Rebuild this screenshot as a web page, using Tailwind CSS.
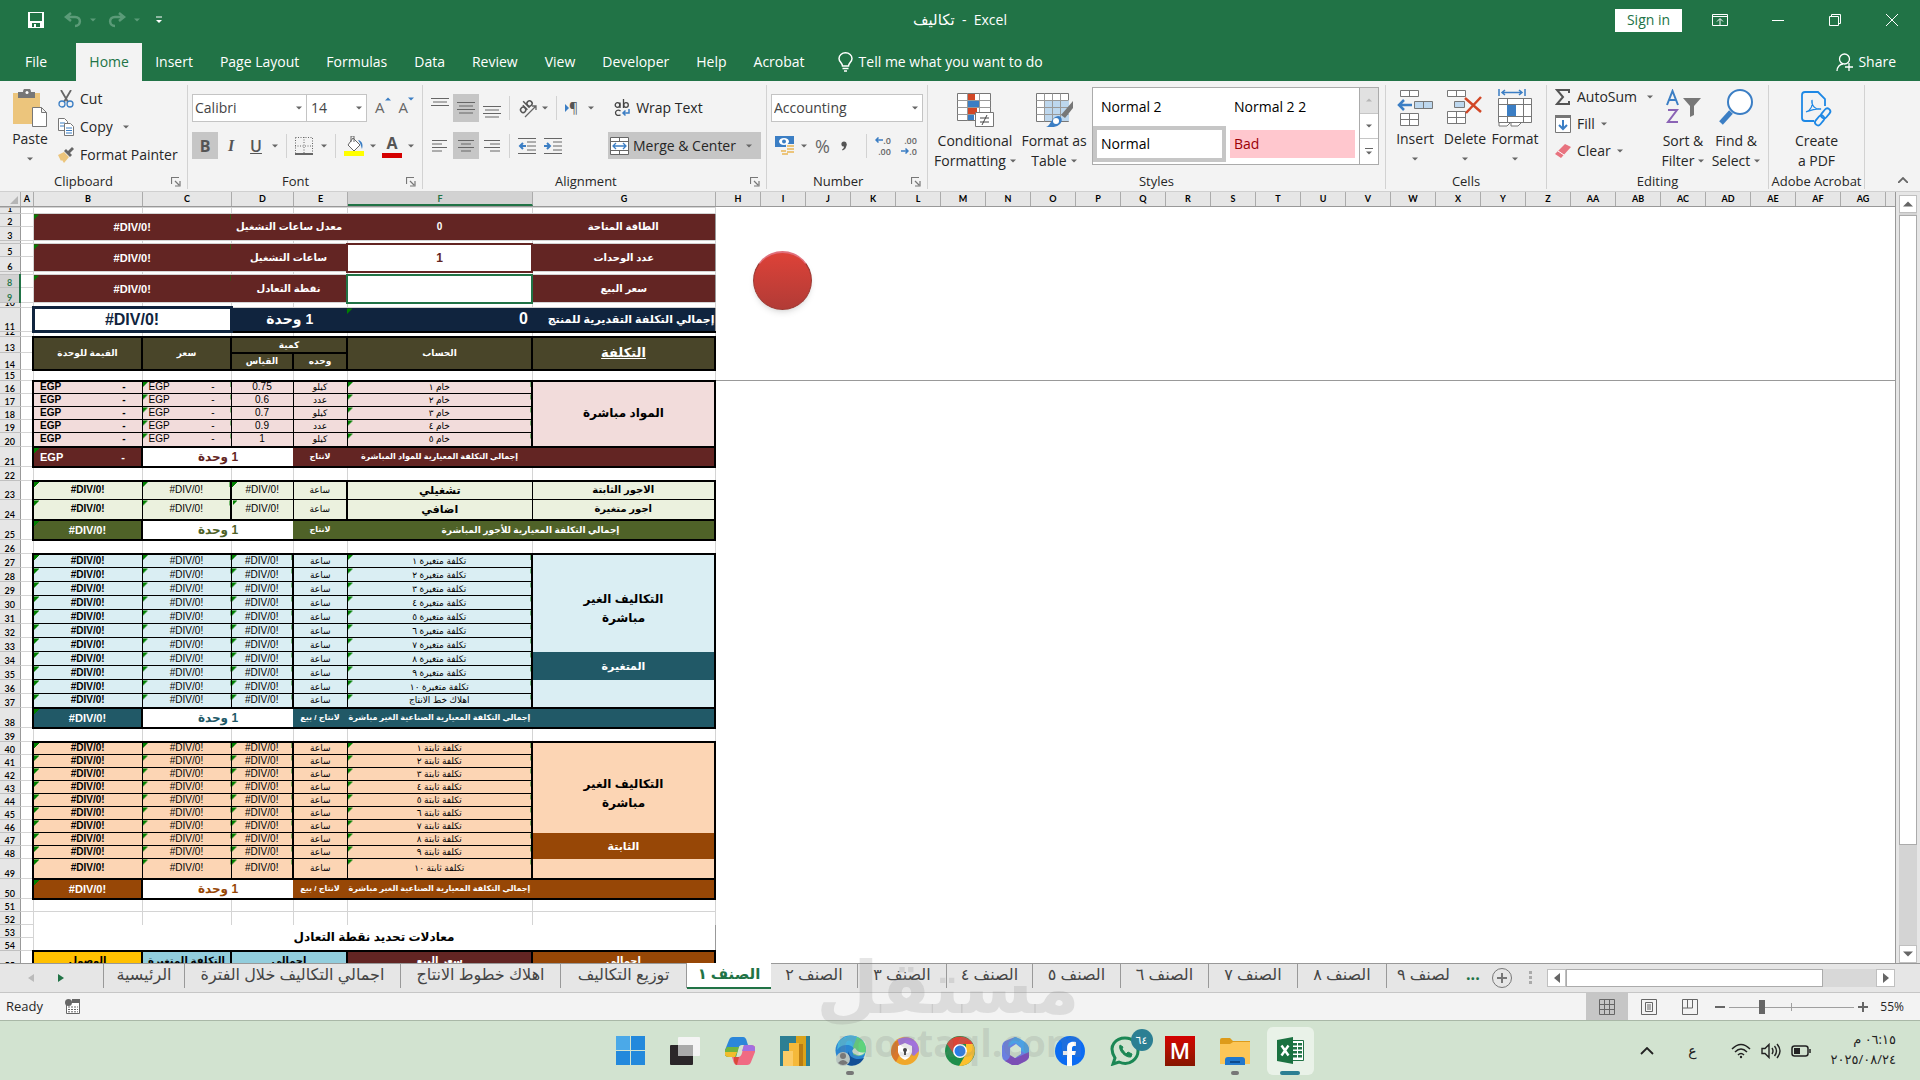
<!DOCTYPE html>
<html lang="en">
<head>
  <meta charset="UTF-8">
  <meta name="viewport" content="width=device-width, initial-scale=1.0">
  <title>تكاليف - Excel</title>
  <script src="https://cdn.jsdelivr.net/npm/@tailwindcss/browser@4"></script>
</head>
<body class="h-screen flex flex-col overflow-hidden bg-[#e6e6e6] font-['Open_Sans','DejaVu_Sans',sans-serif] text-sm text-[#262626]">
  <!-- Shared icons -->
  <svg class="hidden">
    <symbol id="caret" viewBox="0 0 8 4"><path d="M0 0h8L4 4z" fill="#666"/></symbol>
    <symbol id="launcher" viewBox="0 0 10 10"><path d="M.5 7V.5H8M4 4l4 4M9 4v5H4" fill="none" stroke="#777" stroke-width="1.2"/></symbol>
  </svg>

  <!-- Title bar -->
  <header class="bg-[#217346] text-white shrink-0">
    <div class="h-10 mb-[3px] flex items-center relative">
      <div class="flex items-center pl-7 gap-5">
        <button aria-label="Save"><svg class="w-4 h-4" viewBox="0 0 16 16"><path d="M0 0h16v16H0z" fill="#fff"/><path d="M2 1h12v8H2zM4 11h8v4H4z" fill="#217346"/><path d="M6 12h2v3H6z" fill="#fff"/></svg></button>
        <button aria-label="Undo" class="flex items-center gap-2"><svg class="w-[18px] h-4" viewBox="0 0 18 16"><path d="M7 1L2 5l5 4M2 5h9c7 0 6 9 0 9" fill="none" stroke="#5b9b78" stroke-width="2.5"/></svg><svg class="w-1.5 h-1" viewBox="0 0 8 4"><path d="M0 0h8L4 4z" fill="#5b9b78"/></svg></button>
        <button aria-label="Redo" class="flex items-center gap-2 -ml-2"><svg class="w-[18px] h-4" viewBox="0 0 18 16"><path d="M11 1l5 4-5 4M16 5H7c-7 0-6 9 0 9" fill="none" stroke="#5b9b78" stroke-width="2.5"/></svg><svg class="w-1.5 h-1" viewBox="0 0 8 4"><path d="M0 0h8L4 4z" fill="#5b9b78"/></svg></button>
        <button aria-label="Customize" class="-ml-1"><svg class="w-1.5 h-2" viewBox="0 0 6 8"><path d="M0 1h6" stroke="#fff"/><path d="M0 4h6L3 7z" fill="#fff"/></svg></button>
      </div>
      <h1 class="absolute inset-x-0 text-center text-sm font-normal"><bdi class="text-[15px]">تكاليف</bdi>&nbsp; - &nbsp;Excel</h1>
      <div class="ml-auto flex items-center relative pr-[22px]">
        <button class="bg-white text-[#217346] h-[23px] w-[67px] mr-[30px]">Sign in</button>
        <button aria-label="Ribbon options" class="mr-11"><svg class="w-4 h-3" viewBox="0 0 16 12" fill="none" stroke="#fff"><path d="M.5.5h15v11H.5zM.5 2.5h15M8 11V5M5 7.500l3-3 3 3"/></svg></button>
        <button aria-label="Minimize" class="mr-[45px]"><svg class="w-3 h-3" viewBox="0 0 12 12" stroke="#fff"><path d="M0 6.500h12"/></svg></button>
        <button aria-label="Restore" class="mr-[45px]"><svg class="w-3 h-3" viewBox="0 0 12 12" fill="none" stroke="#fff"><path d="M.5 2.500h9v9h-9zM2.500 2.500v-2h9v9h-2"/></svg></button>
        <button aria-label="Close"><svg class="w-3 h-3" viewBox="0 0 12 12" stroke="#fff"><path d="M0 0l12 12M12 0L0 12"/></svg></button>
      </div>
    </div>
    <nav class="h-[38px] flex items-center pl-[25px] pr-6 gap-[27px]">
      <a href="#" class="mr-0.5">File</a>
      <a href="#" class="bg-[#f3f3f3] text-[#217346] h-full w-[66px] flex items-center justify-center -mr-3.5">Home</a>
      <a href="#">Insert</a>
      <a href="#">Page Layout</a>
      <a href="#">Formulas</a>
      <a href="#">Data</a>
      <a href="#">Review</a>
      <a href="#">View</a>
      <a href="#">Developer</a>
      <a href="#">Help</a>
      <a href="#">Acrobat</a>
      <a href="#" class="flex items-center gap-1.5 ml-1.5"><svg class="w-[15px] h-5" viewBox="0 0 15 20" fill="none" stroke="#fff" stroke-width="1.500"><path d="M4.500 14C4.500 11 1 10 1 6.500a6.500 5.700 0 0 1 13 0C14 10 10.500 11 10.500 14zM4.500 16.500h6M6 19h3"/></svg>Tell me what you want to do</a>
      <a href="#" class="ml-auto flex items-center gap-1"><svg class="w-[18px] h-[18px]" viewBox="0 0 18 18" fill="none" stroke="#fff" stroke-width="1.300"><circle cx="8.500" cy="6" r="5"/><path d="M1 18c0-4 3-7 6-7M13 10v8M9 14h8"/></svg>Share</a>
    </nav>
  </header>

  <!-- Ribbon -->
  <section class="h-[111px] shrink-0 bg-[#f3f3f3] border-b border-[#cfcfcf] flex pt-1 pb-0.5">
    <div class="w-[188px] border-r border-[#d2d2d2] flex flex-col">
      <div class="flex h-[90px] pl-3">
        <button class="flex flex-col items-center w-9 pt-1">
          <svg class="w-[34px] h-[38px]" viewBox="0 0 34 38"><path d="M0 4h27v31H0z" fill="#ecc57c"/><path d="M5 3h5a4 4 0 0 1 8 0h4v6H5z" fill="#777"/><circle cx="14" cy="3.500" r="1.500" fill="#fff"/><path d="M19.500 18.500h9l5 5v14h-14zM28.500 18.500v5h5" fill="#fff" stroke="#777"/></svg>
          <span class="leading-6">Paste</span>
          <svg class="w-1.5 h-1 mt-1.5"><use href="#caret"/></svg>
        </button>
        <div class="flex flex-col pl-2.5 leading-7">
          <button class="flex items-center gap-1.5"><svg class="w-4 h-[18px]" viewBox="0 0 16 18" fill="none" stroke-width="1.800"><path d="M3 0l7 12M13 0L6 12" stroke="#666"/><circle cx="4" cy="14" r="3" stroke="#3b7ec4" stroke-width="1.300"/><circle cx="12" cy="14" r="3" stroke="#3b7ec4" stroke-width="1.300"/></svg>Cut</button>
          <button class="flex items-center gap-1.5"><svg class="w-4 h-[18px]" viewBox="0 0 16 18" fill="#fff" stroke="#777"><path d="M.5.5h6l3 3v9h-9z"/><path d="M2 5h5M2 8h5" stroke="#3b7ec4"/><path d="M6.500 5.500h6l3 3v9h-9z"/><path d="M8 10h6M8 12.500h6M8 15h6" stroke="#3b7ec4"/></svg>Copy<svg class="w-1.5 h-1 ml-1"><use href="#caret"/></svg></button>
          <button class="flex items-center gap-1.5 whitespace-nowrap"><svg class="w-4 h-4" viewBox="0 0 16 16"><path d="M0 8l6-3 5 5-5 6-2-3-1 1z" fill="#ecc57c"/><path d="M6 4l2-2 2 2 4-4 2 2-4 4 2 2-2 2z" fill="#666"/></svg>Format Painter</button>
        </div>
      </div>
      <div class="flex items-center justify-between pl-[54px] pr-1.5 text-[13px] leading-[15px]">Clipboard<svg class="w-2.5 h-2.5"><use href="#launcher"/></svg></div>
    </div>

    <div class="w-[235px] border-r border-[#d2d2d2] flex flex-col">
      <div class="h-[90px] flex flex-col gap-2.5 pl-1 pt-[9px]">
        <div class="flex items-center h-7">
          <div class="w-[115px] h-7 border border-[#c4c4c4] bg-white flex items-center pr-1"><select aria-label="Font" class="appearance-none flex-1 pl-0.5 text-[#444]"><option>Calibri</option></select><svg class="w-1.5 h-1"><use href="#caret"/></svg></div>
          <div class="w-[60px] h-7 border border-l-0 border-[#c4c4c4] bg-white flex items-center pr-1"><select aria-label="Font size" class="appearance-none flex-1 pl-1 text-[#444]"><option>14</option></select><svg class="w-1.5 h-1"><use href="#caret"/></svg></div>
          <button aria-label="Grow font" class="ml-2 flex text-[15px] text-[#666]">A<svg class="w-1.5 h-1" viewBox="0 0 8 4"><path d="M0 4h8L4 0z" fill="#3b7ec4"/></svg></button>
          <button aria-label="Shrink font" class="ml-2 flex text-[15px] text-[#666]">A<svg class="w-1.5 h-1" viewBox="0 0 8 4"><path d="M0 0h8L4 4z" fill="#3b7ec4"/></svg></button>
        </div>
        <div class="flex items-center h-[27px] text-base text-[#555]">
          <button class="w-[26px] h-full bg-[#c6c6c6] font-bold">B</button>
          <button class="w-[26px] font-['Liberation_Serif',serif] font-bold italic">I</button>
          <button class="w-6 underline font-semibold">U</button>
          <svg class="w-1.5 h-1 mx-1"><use href="#caret"/></svg>
          <span class="w-px h-6 bg-[#d2d2d2] ml-1 mr-2"></span>
          <button aria-label="Borders"><svg class="w-[18px] h-[18px]" viewBox="0 0 18 18" fill="none" stroke="#666"><path d="M.5.5h17v16M.5.5v16M9 0v16M0 9h18" stroke-dasharray="1 1.500"/><path d="M0 17h18" stroke-width="2"/></svg></button>
          <svg class="w-1.5 h-1 mx-2"><use href="#caret"/></svg>
          <span class="w-px h-6 bg-[#d2d2d2] mr-2"></span>
          <button aria-label="Fill color"><svg class="w-5 h-5" viewBox="0 0 20 20"><path d="M9 2l7 7-6 6-6-6z" fill="#fff" stroke="#666"/><path d="M7 6V0h3v6" fill="none" stroke="#666"/><path d="M14 4c5 1 5 6 4 9-1-3-1-5-4-9" fill="#3b7ec4"/><path d="M0 15h20v5H0z" fill="#ff0"/></svg></button>
          <svg class="w-1.5 h-1 mx-1.5"><use href="#caret"/></svg>
          <button class="w-5 h-6 leading-[18px] font-bold border-b-[5px] border-[#d40000]">A</button>
          <svg class="w-1.5 h-1 mx-1.5"><use href="#caret"/></svg>
        </div>
      </div>
      <div class="flex items-center justify-between pl-[94px] pr-1.5 text-[13px] leading-[15px]">Font<svg class="w-2.5 h-2.5"><use href="#launcher"/></svg></div>
    </div>

    <div class="w-[344px] border-r border-[#d2d2d2] flex flex-col">
      <div class="h-[90px] flex flex-col gap-2.5 pl-1 pr-[5px] pt-[9px]">
        <div class="flex items-center h-7">
          <button aria-label="Top align" class="w-[26px] h-7 flex justify-center pt-1"><svg class="w-[18px] h-2" viewBox="0 0 18 8" stroke="#666"><path d="M0 .5h18M2 4h14M0 7.500h18"/></svg></button>
          <button aria-label="Middle align" class="w-[26px] h-7 bg-[#c6c6c6] flex justify-center items-center"><svg class="w-[18px] h-3" viewBox="0 0 18 12" stroke="#666"><path d="M0 .5h18M2 4h14M0 7.500h18M2 11h14"/></svg></button>
          <button aria-label="Bottom align" class="w-[26px] h-7 flex justify-center items-end pb-1"><svg class="w-[18px] h-3" viewBox="0 0 18 12" stroke="#666"><path d="M0 .5h18M2 4h14M0 7.500h18M2 11h14"/></svg></button>
          <span class="w-px h-6 bg-[#d2d2d2] ml-1 mr-2"></span>
          <button aria-label="Orientation"><svg class="w-5 h-5 overflow-visible" viewBox="0 0 20 20" fill="none" stroke="#555" stroke-width="1.500"><g transform="rotate(-45 8 9)"><circle cx="4" cy="9" r="2.600"/><path d="M7 5.500V12"/><path d="M10 3v9"/><circle cx="13" cy="9" r="2.600"/></g><path d="M7 19L18 8M18 12V8h-4" stroke="#666" stroke-width="1.300"/></svg></button>
          <svg class="w-1.5 h-1 ml-1 mr-2"><use href="#caret"/></svg>
          <span class="w-px h-6 bg-[#d2d2d2] mr-2"></span>
          <button aria-label="Text direction" class="flex items-center text-[#555]"><svg class="w-1 h-2" viewBox="0 0 4 8"><path d="M0 0l4 4-4 4z" fill="#3b7ec4"/></svg>¶</button>
          <svg class="w-1.5 h-1 mx-2.5"><use href="#caret"/></svg>
          <button class="flex items-center gap-1.5 ml-2.5 whitespace-nowrap"><svg class="w-4 h-[18px]" viewBox="0 0 16 18" fill="none" stroke="#444" stroke-width="1.300"><circle cx="3.500" cy="6" r="2.300"/><path d="M6 3.500V9M9.500 0v9M6.500 11.800c-3-1.500-5 0-5 2s2 3.500 5 2"/><circle cx="12" cy="6" r="2.300"/><path d="M15 10v4H9M11.500 11.500L9 14l2.500 2.500" stroke="#3b7ec4" stroke-width="1.500"/></svg>Wrap Text</button>
        </div>
        <div class="flex items-center h-[27px]">
          <button aria-label="Align left" class="w-[26px] h-full flex justify-center items-center"><svg class="w-4 h-3" viewBox="0 0 16 12" stroke="#666"><path d="M0 .5h15M0 4h10M0 7.500h15M0 11h10"/></svg></button>
          <button aria-label="Center" class="w-[26px] h-full bg-[#c6c6c6] flex justify-center items-center"><svg class="w-4 h-3" viewBox="0 0 16 12" stroke="#666"><path d="M0 .5h16M3 4h10M0 7.500h16M3 11h10"/></svg></button>
          <button aria-label="Align right" class="w-[26px] h-full flex justify-center items-center"><svg class="w-4 h-3" viewBox="0 0 16 12" stroke="#666"><path d="M0 .5h16M6 4h10M0 7.500h16M6 11h10"/></svg></button>
          <span class="w-px h-6 bg-[#d2d2d2] ml-1 mr-2"></span>
          <button aria-label="Decrease indent" class="mr-2"><svg class="w-[18px] h-4" viewBox="0 0 18 16" stroke="#666"><path d="M0 .5h18M9 4h9M9 8h9M9 12h9M0 15.500h18"/><path d="M8 8H2M5 5L2 8l3 3" fill="none" stroke="#3b7ec4" stroke-width="2"/></svg></button>
          <button aria-label="Increase indent"><svg class="w-[18px] h-4" viewBox="0 0 18 16" stroke="#666"><path d="M0 .5h18M9 4h9M9 8h9M9 12h9M0 15.500h18"/><path d="M0 8h6M3 5l3 3-3 3" fill="none" stroke="#3b7ec4" stroke-width="2"/></svg></button>
          <button class="ml-auto w-[153px] h-full bg-[#c6c6c6] flex items-center gap-1 pl-0.5 whitespace-nowrap"><svg class="w-[19px] h-[18px]" viewBox="0 0 19 18" fill="#fff" stroke="#666"><path d="M.5.5h18v17H.5zM.5 4.500h18M.5 13.500h18M9.500.5v4M9.500 13.500v4"/><path d="M3 9h13M6 6L3 9l3 3M13 6l3 3-3 3" fill="none" stroke="#3b7ec4" stroke-width="1.300"/></svg>Merge &amp; Center<svg class="w-1.5 h-1 ml-1.5"><use href="#caret"/></svg></button>
        </div>
      </div>
      <div class="flex items-center justify-between pl-[132px] pr-1.5 text-[13px] leading-[15px]">Alignment<svg class="w-2.5 h-2.5"><use href="#launcher"/></svg></div>
    </div>

    <div class="w-[161px] border-r border-[#d2d2d2] flex flex-col">
      <div class="h-[90px] flex flex-col gap-2.5 px-1 pt-[9px]">
        <div class="h-7 border border-[#c4c4c4] bg-white flex items-center pr-1"><select aria-label="Number format" class="appearance-none flex-1 pl-0.5 text-[#444]"><option>Accounting</option></select><svg class="w-1.5 h-1"><use href="#caret"/></svg></div>
        <div class="flex items-center h-[27px] text-[#666]">
          <button aria-label="Accounting format" class="ml-1"><svg class="w-5 h-[19px]" viewBox="0 0 20 19"><path d="M0 0h19v11H0z" fill="#3b7ec4"/><ellipse cx="9" cy="5.500" rx="5" ry="3.500" fill="#fff"/><circle cx="9" cy="5.500" r="2" fill="#3b7ec4"/><path d="M11 8h9v10H6v-5h5z" fill="#f3f3f3"/><path d="M12 9h7v2h-7zM12 12h7v2h-7zM12 15h7v2h-7zM6 14h5v2H6zM7 17h6v2H7z" fill="#ecc57c"/></svg></button>
          <svg class="w-1.5 h-1 ml-1.5"><use href="#caret"/></svg>
          <button class="ml-2 text-lg">%</button>
          <button aria-label="Comma style" class="w-7 h-full flex items-center justify-center"><svg class="w-1.5 h-2.5" viewBox="0 0 6 10"><circle cx="3" cy="3" r="2.600" fill="#555"/><path d="M5.600 3q0 5-4 6.500L1 8.500Q3.500 7 3 4z" fill="#555"/></svg></button>
          <span class="w-px h-6 bg-[#d2d2d2] mx-2"></span>
          <button aria-label="Increase decimal" class="mr-2.5 w-4 text-[9px] leading-[11px] font-semibold text-right"><span class="flex items-center justify-between"><svg class="w-2 h-1.5" viewBox="0 0 8 6"><path d="M8 3H1M3.500.5L1 3l2.500 2.500" fill="none" stroke="#3b7ec4" stroke-width="1.500"/></svg>.0</span>.00</button>
          <button aria-label="Decrease decimal" class="w-4 text-[9px] leading-[11px] font-semibold text-right">.00<span class="flex items-center justify-between"><svg class="w-2 h-1.5" viewBox="0 0 8 6"><path d="M0 3h7M4.500.5L7 3 4.500 5.500" fill="none" stroke="#3b7ec4" stroke-width="1.500"/></svg>.0</span></button>
        </div>
      </div>
      <div class="flex items-center justify-between pl-[46px] pr-1.5 text-[13px] leading-[15px]">Number<svg class="w-2.5 h-2.5"><use href="#launcher"/></svg></div>
    </div>

    <div class="w-[458px] border-r border-[#d2d2d2] flex flex-col">
      <div class="h-[90px] flex pl-1.5">
        <button class="w-[82px] flex flex-col items-center pt-2 leading-5">
          <svg class="w-[37px] h-[34px] mb-1" viewBox="0 0 37 34"><path d="M.5.5h33v27H.5z" fill="#fff" stroke="#777"/><path d="M.5 7.500h33M.5 14.500h33M.5 21.500h33M10.500.5v27M22.500.5v27" stroke="#999"/><path d="M11 1h7v6h-7zM11 15h9v6h-9z" fill="#d24726"/><path d="M11 8h11v6H11zM11 22h6v5h-6z" fill="#3b7ec4"/><path d="M18.500 19.500h18v14h-18z" fill="#fff" stroke="#777"/><path d="M23 25h9M23 29h9M30 22l-5 10" stroke="#444"/></svg>
          <span>Conditional</span><span class="flex items-center gap-1">Formatting<svg class="w-1.5 h-1"><use href="#caret"/></svg></span>
        </button>
        <button class="w-[76px] flex flex-col items-center pt-2 leading-5 whitespace-nowrap">
          <svg class="w-[37px] h-[34px] mb-1" viewBox="0 0 37 34"><path d="M.5.5h32v28H.5z" fill="#fff" stroke="#777"/><path d="M8 7h25v21H8z" fill="#bdd7ee"/><path d="M.5 7.500h32M.5 14.500h32M.5 21.500h32M8.500.5v28M16.500.5v28M24.500.5v28" stroke="#999"/><path d="M37 8L25 22l4 3 8-10z" fill="#777"/><path d="M10 34c5-1 5-10 12-11 4 0 5 5 2 8-3 3-9 4-14 3z" fill="#3b7ec4"/><circle cx="20" cy="28" r="3" fill="#fff"/></svg>
          <span>Format as</span><span class="flex items-center gap-1">Table<svg class="w-1.5 h-1"><use href="#caret"/></svg></span>
        </button>
        <div class="mt-0.5 h-[78px] w-[287px] border border-[#ababab] bg-white flex text-black">
          <div class="flex-1 grid grid-cols-2 grid-rows-[38px_36px]">
            <button class="text-left pl-2">Normal 2</button>
            <button class="text-left pl-2">Normal 2 2</button>
            <button class="text-left pl-1 border-4 border-[#c6c6c6]">Normal</button>
            <button class="text-left pl-1 bg-[#ffc7ce] text-[#9c0006] h-7 mt-1 mx-1">Bad</button>
          </div>
          <div class="w-[19px] border-l border-[#ababab] flex flex-col divide-y divide-[#c6c6c6]">
            <button aria-label="Up" class="flex-1 bg-[#e1e1e1] flex items-center justify-center"><svg class="w-1.5 h-1" viewBox="0 0 8 4"><path d="M0 4h8L4 0z" fill="#b5b5b5"/></svg></button>
            <button aria-label="Down" class="flex-1 flex items-center justify-center"><svg class="w-1.5 h-1"><use href="#caret"/></svg></button>
            <button aria-label="More" class="flex-1 flex flex-col gap-0.5 items-center justify-center"><span class="w-2 h-px bg-[#666]"></span><svg class="w-1.5 h-1"><use href="#caret"/></svg></button>
          </div>
        </div>
      </div>
      <div class="text-center text-[13px] leading-[15px]">Styles</div>
    </div>

    <div class="w-[161px] border-r border-[#d2d2d2] flex flex-col">
      <div class="h-[90px] flex pl-1">
        <button class="w-[50px] flex flex-col items-center pt-1">
          <svg class="w-9 h-[38px]" viewBox="0 0 36 38" fill="#fff" stroke="#777"><path d="M3.500 1.500h18v6h-18zM12.500 1.500v6M3.500 24.500h18v12h-18zM12.500 24.500v12M3.500 30.500h18"/><path d="M17.500 12.500h18v7h-18zM26.500 12.500v7" fill="#bdd7ee"/><path d="M15 16H2M7 11l-5 5 5 5" fill="none" stroke="#3b7ec4" stroke-width="2.500"/></svg>
          <span class="leading-6">Insert</span><svg class="w-1.5 h-1 mt-1.5"><use href="#caret"/></svg>
        </button>
        <button class="w-[50px] flex flex-col items-center pt-1">
          <svg class="w-9 h-[38px]" viewBox="0 0 36 38" fill="#fff" stroke="#777"><path d="M.5 1.500h18v6H.5zM9.500 1.500v6M.5 22.500h18v12H.5zM9.500 22.500v12M.5 28.500h18"/><path d="M7.500 12.500h10v6h-10z" fill="#bdd7ee"/><path d="M18 9l16 14M34 8L19 24" stroke="#d24726" stroke-width="2.500"/></svg>
          <span class="leading-6">Delete</span><svg class="w-1.5 h-1 mt-1.5"><use href="#caret"/></svg>
        </button>
        <button class="w-[50px] flex flex-col items-center pt-1">
          <svg class="w-9 h-[38px]" viewBox="0 0 36 38" fill="#fff" stroke="#777"><path d="M1.500 9.500h33v24h-33zM10.500 9.500v24M26.500 9.500v24M1.500 15.500h33M1.500 27.500h33"/><path d="M10 16h9v11h-9z" fill="#3b7ec4" stroke="none"/><path d="M2 34v3h8l3-3M14 34v3h7l3-3"/><path d="M2 0v7M28 0v7M5 3.500h20M8 1L5 3.500 8 6M22 1l3 2.500L22 6" fill="none" stroke="#3b7ec4" stroke-width="1.500"/></svg>
          <span class="leading-6">Format</span><svg class="w-1.5 h-1 mt-1.5"><use href="#caret"/></svg>
        </button>
      </div>
      <div class="text-center text-[13px] leading-[15px]">Cells</div>
    </div>

    <div class="w-[222px] border-r border-[#d2d2d2] flex flex-col">
      <div class="h-[90px] flex pl-2">
        <div class="flex flex-col leading-[27px] w-[102px] -mt-0.5">
          <button class="flex items-center gap-1.5"><svg class="w-4 h-4" viewBox="0 0 16 16"><path d="M14 4V1H2l6 7-6 7h12v-3" fill="none" stroke="#555" stroke-width="2"/></svg>AutoSum<svg class="w-1.5 h-1 ml-1"><use href="#caret"/></svg></button>
          <button class="flex items-center gap-1.5"><svg class="w-4 h-[18px]" viewBox="0 0 16 18"><path d="M.5.5h15v17H.5z" fill="#fff" stroke="#777"/><path d="M0 0h16v3H0z" fill="#777"/><path d="M8 5v9M4 10l4 4 4-4" fill="none" stroke="#3b7ec4" stroke-width="2"/></svg>Fill<svg class="w-1.5 h-1"><use href="#caret"/></svg></button>
          <button class="flex items-center gap-1.5"><svg class="w-4 h-4" viewBox="0 0 16 16"><path d="M0 11L10 1l6 3L6 15z" fill="#e8737f"/><path d="M3 8l6 4" stroke="#fff"/></svg>Clear<svg class="w-1.5 h-1"><use href="#caret"/></svg></button>
        </div>
        <button class="w-[52px] flex flex-col items-center pt-1 leading-5 whitespace-nowrap">
          <svg class="w-9 h-9 mb-1.5" viewBox="0 0 36 36"><path d="M2 16L7.500 2 13 16M4 11h7" fill="none" stroke="#3b7ec4" stroke-width="2"/><path d="M3 21h9L3 33h10" fill="none" stroke="#8b63b5" stroke-width="2"/><path d="M18 9h18l-7 8v9l-4 2V17z" fill="#777"/></svg>
          <span>Sort &amp;</span><span class="flex items-center gap-1">Filter<svg class="w-1.5 h-1"><use href="#caret"/></svg></span>
        </button>
        <button class="w-[54px] flex flex-col items-center pt-1 leading-5 whitespace-nowrap">
          <svg class="w-9 h-9 mb-1.5" viewBox="0 0 36 36" fill="none" stroke="#3b7ec4"><path d="M3 34l10-11" stroke-width="5"/><circle cx="22" cy="13" r="12" fill="#fff" stroke-width="2"/></svg>
          <span>Find &amp;</span><span class="flex items-center gap-1">Select<svg class="w-1.5 h-1"><use href="#caret"/></svg></span>
        </button>
      </div>
      <div class="text-center text-[13px] leading-[15px]">Editing</div>
    </div>

    <div class="w-24 border-r border-[#d2d2d2] flex flex-col">
      <button class="h-[90px] flex flex-col items-center pt-1.5 leading-5">
        <svg class="w-8 h-9 mb-1" viewBox="0 0 32 36" fill="none" stroke="#1e88e5" stroke-width="1.800"><path d="M13 30H4q-3 0-3-3V4q0-3 3-3h13l7 7v7"/><path d="M5 21c5-2 7-7 6-12-1 6 4 10 9 9-6-1-10 1-15 3z" stroke-width="1.300"/><rect x="22" y="17" width="6" height="11" rx="3" transform="rotate(40 25 22)"/><rect x="16" y="24" width="6" height="11" rx="3" transform="rotate(40 19 29)"/></svg>
        <span>Create</span><span>a PDF</span>
      </button>
      <div class="text-center text-[13px] leading-[15px] whitespace-nowrap">Adobe Acrobat</div>
    </div>
    <button aria-label="Collapse ribbon" class="ml-auto self-end mr-3 mb-1.5"><svg class="w-2.5 h-1.5" viewBox="0 0 10 6" fill="none" stroke="#666" stroke-width="1.800"><path d="M0 6l5-5 5 5"/></svg></button>
  </section>

  <!-- Worksheet -->
  <main class="flex-1 min-h-0 flex">
    <div class="flex-1 min-w-0 flex flex-col border-r border-[#999]">
      <div id="columns" class="h-[15px] shrink-0 flex border-b border-[#999] overflow-hidden text-[9px] leading-[14px] font-bold text-center text-black font-['Lato',sans-serif]"></div>
      <div class="flex-1 min-h-0 flex overflow-hidden bg-white">
        <table id="sheet" class="w-[716px] shrink-0 self-start table-fixed border-collapse border-r border-[#999] text-[10px] leading-[10px] text-black font-['Liberation_Sans','DejaVu_Sans',sans-serif]">
          <colgroup>
            <col class="w-5"><col class="w-[13px]"><col class="w-[109px]"><col class="w-[89px]"><col class="w-[62px]"><col class="w-[54px]"><col class="w-[185px]"><col class="w-[183px]">
          </colgroup>
          <tbody></tbody>
        </table>
        <div class="flex-1">
          <div class="h-[174px] border-b border-[#999] pt-11 pl-[37px]">
            <div class="size-[59px] rounded-full bg-linear-to-b from-[#dd4238] to-[#b23b36] border border-t-2 border-[#9c3a34] border-t-[#e0707c] shadow-md"></div>
          </div>
        </div>
      </div>
    </div>
    <!-- Vertical scrollbar -->
    <div class="w-6 flex flex-col items-center">
      <button aria-label="Scroll up" class="mt-[3px] w-[18px] h-[18px] shrink-0 bg-white border border-[#c0c0c0] flex items-center justify-center"><svg class="w-2.5 h-1.5" viewBox="0 0 8 4"><path d="M0 4h8L4 0z" fill="#666"/></svg></button>
      <div class="w-[18px] flex-1 bg-[#d4d4d4] flex flex-col"><div class="h-[86%] mt-0.5 bg-white border border-[#ababab]"></div></div>
      <button aria-label="Scroll down" class="w-[18px] h-[18px] shrink-0 bg-white border border-[#c0c0c0] flex items-center justify-center"><svg class="w-2.5 h-1.5"><use href="#caret"/></svg></button>
    </div>
  </main>

  <!-- Sheet tabs -->
  <div class="h-[30px] shrink-0 border-t border-[#999] border-b border-b-[#c6c6c6] flex text-base text-[#444] relative">
    <div class="w-[103px] flex items-center pl-7 gap-6">
      <button aria-label="Previous sheet"><svg class="w-1.5 h-2" viewBox="0 0 6 8"><path d="M6 0v8L0 4z" fill="#bbb"/></svg></button>
      <button aria-label="Next sheet"><svg class="w-1.5 h-2" viewBox="0 0 6 8"><path d="M0 0v8l6-4z" fill="#217346"/></svg></button>
    </div>
    <div id="tabs" class="flex"></div>
    <span class="pl-1.5 leading-5 font-bold text-[#217346]">...</span>
    <button aria-label="New sheet" class="ml-3"><svg class="w-5 h-5" viewBox="0 0 20 20" fill="none" stroke="#777"><circle cx="10" cy="10" r="9.500"/><path d="M5 10h10M10 5v10" stroke-width="2"/></svg></button>
    <div class="ml-auto flex items-center mr-[25px]">
      <svg class="w-1 h-3.5 mr-3.5" viewBox="0 0 4 14"><path d="M0 0h3v3H0zM0 5h3v3H0zM0 10h3v3H0z" fill="#aaa"/></svg>
      <button aria-label="Scroll left" class="w-[19px] h-[18px] bg-white border border-[#c0c0c0] flex items-center justify-center"><svg class="w-1.5 h-2.5" viewBox="0 0 6 10"><path d="M6 0v10L0 5z" fill="#666"/></svg></button>
      <div class="w-[310px] h-[18px] bg-[#d8d8d8]"><div class="w-[257px] h-[18px] bg-white border border-[#ababab]"></div></div>
      <button aria-label="Scroll right" class="w-[19px] h-[18px] bg-white border border-[#c0c0c0] flex items-center justify-center"><svg class="w-1.5 h-2.5" viewBox="0 0 6 10"><path d="M0 0v10l6-5z" fill="#666"/></svg></button>
    </div>
  </div>

  <!-- Status bar -->
  <div class="h-[27px] shrink-0 bg-[#f3f3f3] flex items-center pl-1.5 text-[13px]">
    <span>Ready</span>
    <svg class="w-[15px] h-[15px] ml-[22px]" viewBox="0 0 15 15"><path d="M1.500 3.500h13v11h-13z" fill="#fff" stroke="#666"/><path d="M7 0h8v4H7z" fill="#666"/><circle cx="3.500" cy="3.500" r="3.500" fill="#666"/><path d="M3 8h10M3 10.500h10M3 12.800h10" stroke="#666" stroke-dasharray="2 1"/></svg>
    <div class="ml-auto flex items-center h-full pr-4">
      <button aria-label="Normal view" class="w-[42px] h-full bg-[#c6c6c6] flex items-center justify-center"><svg class="w-4 h-4" viewBox="0 0 16 16" fill="none" stroke="#666"><path d="M.5.5h15v15H.5zM5.500 0v16M10.500 0v16M0 5.500h16M0 10.500h16"/></svg></button>
      <button aria-label="Page layout" class="w-[41px] flex justify-center"><svg class="w-4 h-4" viewBox="0 0 16 16" fill="none" stroke="#666"><path d="M.5.5h15v15H.5zM4.500 3.500h7v9h-7zM6 6h4M6 8h4M6 10h4"/></svg></button>
      <button aria-label="Page break" class="w-[42px] flex justify-center"><svg class="w-4 h-4" viewBox="0 0 16 16" fill="none" stroke="#666"><path d="M.5.5h15v15H.5zM5.500 0v9M10.500 0v9H0"/></svg></button>
      <button aria-label="Zoom out" class="w-2.5 h-0.5 bg-[#666] ml-1"></button>
      <div class="relative w-[125px] h-4 ml-1"><div class="absolute inset-x-0 top-2 h-px bg-[#a0a0a0]"></div><div class="absolute left-[62px] top-1 w-px h-2 bg-[#a0a0a0]"></div><div class="absolute left-[30px] top-px w-1.5 h-3.5 bg-[#666]"></div></div>
      <button aria-label="Zoom in" class="ml-1"><svg class="w-2.5 h-2.5" viewBox="0 0 10 10" stroke="#666" stroke-width="2"><path d="M0 5h10M5 0v10"/></svg></button>
      <span class="ml-3 text-xs">55%</span>
    </div>
  </div>

  <!-- Taskbar -->
  <footer class="h-[60px] shrink-0 bg-[#d2e3d0] border-t border-[#a9b8a7] relative flex items-center justify-center">
    <div class="flex">
      <button aria-label="Start" class="w-[55px] flex justify-center items-center"><svg class="w-[29px] h-[29px]" viewBox="0 0 29 29"><path d="M0 0h14v14H0z" fill="#4ba9e8"/><path d="M15 0h14v14H15zM0 15h14v14H0zM15 15h14v14H15z" fill="#2389dc"/></svg></button>
      <button aria-label="Task view" class="w-[55px] flex justify-center items-center"><svg class="w-[30px] h-7" viewBox="0 0 30 28"><rect x="8" width="22" height="19" rx="1" fill="#f4f4f4"/><rect y="8" width="23" height="20" rx="1" fill="#2b2629"/><path d="M8 8h15v11H8z" fill="#aaa"/></svg></button>
      <button aria-label="Copilot" class="w-[55px] flex justify-center items-center"><svg class="w-[30px] h-7" viewBox="0 0 30 28"><path d="M8 0h10q3 0 4 5l1 3h-6q-3 0-4 4l-2 8H4q-6 0-4-7L4 3q1-3 4-3z" fill="#2b86d9"/><path d="M2 10h12l-3 10H4q-6 0-4-7z" fill="#72b43e"/><path d="M0 15h12l-2 5H4q-5 0-4-5z" fill="#f1bd2b"/><path d="M22 28H12q-3 0-4-5l-1-3h6q3 0 4-4l2-8h7q6 0 4 7l-4 10q-1 3-4 3z" fill="#f06a83"/><path d="M19 8h7q5 0 4 6H17z" fill="#a36fe0"/><path d="M9 20h5l-2 8q-2 0-3-4z" fill="#d94a3a"/></svg></button>
      <button aria-label="Power BI" class="w-[55px] flex justify-center items-center"><svg class="w-[30px] h-[30px]" viewBox="0 0 30 30"><path d="M0 0h30v30H0z" fill="#2d7f93"/><path d="M16 0h10v30H16z" fill="#dba31a"/><path d="M9 7h10v23H9z" fill="#f5b93a"/><path d="M3 15h10v15H3z" fill="#fbcb66"/><path d="M19 8h4v22h-4z" fill="#b97c12"/></svg></button>
      <button aria-label="Edge" class="w-[55px] flex justify-center items-center relative"><svg class="w-[31px] h-[31px]" viewBox="0 0 31 31"><circle cx="15.500" cy="15.500" r="15" fill="#2a86d1"/><path d="M3 8C9-3 30-2 31 14c0 8-8 8-13 5 3-4 0-9-6-9-4 0-7 1-10 5z" fill="#48b4dd"/><path d="M22 2c7 3 9 8 9 13-1 6-8 7-13 4 2-3 1-5 0-7z" fill="#5fd37b"/><path d="M18 18q-2-3 2-5 4 6 10 4-3 4-8 3z" fill="#d2e3d0"/><path d="M14 16c-1 6 7 10 15 7-4 8-14 10-19 5z" fill="#124f96"/><circle cx="8" cy="24" r="7" fill="#b8c4c0"/><circle cx="8" cy="21" r="3" fill="#777"/><path d="M3 28q5-6 10 0-5 4-10 0z" fill="#777"/></svg><span class="absolute bottom-0 w-2 h-1 rounded-full bg-[#777]"></span></button>
      <button aria-label="VPN" class="w-[55px] flex justify-center items-center"><svg class="w-7 h-7" viewBox="0 0 28 28"><circle cx="14" cy="14" r="14" fill="#f0a82b"/><path d="M6 3C17-4 28 3 28 14l-5 5L8 8z" fill="#a273dc"/><path d="M0 14Q1 6 7 3l2 14-4 8Q0 20 0 14z" fill="#d9772b"/><path d="M14 6l7 3v6q-1 5-7 8-6-3-7-8V9z" fill="#fff"/><circle cx="14" cy="13" r="2" fill="#444"/><path d="M13 13h2v5h-2z" fill="#444"/></svg></button>
      <button aria-label="Chrome" class="w-[55px] flex justify-center items-center"><svg class="w-[30px] h-[30px]" viewBox="0 0 30 30"><circle cx="15" cy="15" r="15" fill="#1e8e4a"/><path d="M2 8A15 15 0 0 1 28 8H15l-6 10z" fill="#dc4437"/><path d="M28 8a15 15 0 0 1-14 22l7-12V8z" fill="#fcc02e"/><circle cx="15" cy="15" r="7" fill="#fff"/><circle cx="15" cy="15" r="5.500" fill="#2a7de9"/></svg></button>
      <button aria-label="Microsoft 365" class="w-[55px] flex justify-center items-center"><svg class="w-[27px] h-7" viewBox="0 0 27 28"><path d="M13 0l9 5q4 2 5 7v8l-4 4-8 4q-2 1-4 0l-8-4q-3-2-3-5V9q0-3 3-5z" fill="#6a7fe0"/><path d="M13 0q5 1 10 5 4 3 4 8v5l-8-4v-4l-6-4-7 4 1-5z" fill="#4ba0e4"/><path d="M8 18l6 3 13-6v5q0 2-3 4l-8 4q-3 1-6 0l-7-4q5-2 5-6z" fill="#7b4fb5"/><path d="M8 11l6-4 5 4v6l-6 4-5-3z" fill="#d2e3d0"/></svg></button>
      <button aria-label="Facebook" class="w-[55px] flex justify-center items-center"><svg class="w-[30px] h-[30px]" viewBox="0 0 30 30"><circle cx="15" cy="15" r="15" fill="#0b6cf2"/><path d="M12 30V19H8v-4h4v-3c0-5 3-7 9-6v4c-4 0-4 0-4 5h4l-1 4h-3v11z" fill="#fff"/></svg></button>
      <button aria-label="WhatsApp" class="w-[55px] flex justify-center items-center relative"><svg class="w-[30px] h-[30px]" viewBox="0 0 30 30" fill="none" stroke="#1b8754" stroke-width="3"><path d="M3 28l2-6C-3 9 7 2 15 2s13 6 13 13-8 16-19 11z"/><path d="M10 9c-2 5 5 13 11 12l1-3-4-2-2 2-4-5 1-2z" fill="#1b8754" stroke-width="1"/></svg><span class="absolute top-0.5 right-0 size-[22px] rounded-full bg-[#2c7f93] text-white text-[11px] leading-[22px] text-center">٦٤</span></button>
      <button class="w-[55px] flex justify-center items-center"><span class="w-[30px] h-[30px] bg-linear-to-b from-[#d40000] to-[#861500] text-white font-semibold text-[22px] leading-[29px]">M</span></button>
      <button aria-label="File Explorer" class="w-[55px] flex justify-center items-center relative"><svg class="w-[30px] h-7" viewBox="0 0 30 28"><path d="M0 3q0-2 2-2h8l3 3h17v8H0z" fill="#dd9b1a"/><path d="M0 7h10l3-2h17v22H0z" fill="#fcc657"/><path d="M5 28v-5q0-3 3-3h14q3 0 3 3v5z" fill="#2178cc"/><path d="M10 24h10v2H10z" fill="#0c4a8c"/></svg><span class="absolute bottom-0 w-2 h-1 rounded-full bg-[#777]"></span></button>
      <button aria-label="Excel" class="w-[55px] h-12 flex justify-center items-center relative"><span class="absolute inset-x-1 inset-y-0 bg-[#e9f2e8] rounded-md"></span><svg class="relative w-[27px] h-[27px]" viewBox="0 0 27 27"><path d="M15 3.500h11.500v20H15z" fill="#fff" stroke="#217346"/><path d="M16 6h4v2.500h-4zM16 10h4v2.500h-4zM16 14h4v2.500h-4zM16 18h4v2.500h-4zM21 6h4v2.500h-4zM21 10h4v2.500h-4zM21 14h4v2.500h-4zM21 18h4v2.500h-4z" fill="#217346"/><path d="M0 3l16-3v27L0 24z" fill="#1b7141"/><path d="M4.500 8.500l7 10M11.500 8.500l-7 10" stroke="#fff" stroke-width="2.400"/></svg><span class="absolute bottom-0 w-5 h-1 rounded-full bg-[#2c7f93]"></span></button>
    </div>
    <div class="absolute right-6 inset-y-0 flex items-center text-[#222]">
      <button aria-label="Hidden icons"><svg class="w-3.5 h-2" viewBox="0 0 14 8" fill="none" stroke="#222" stroke-width="1.800"><path d="M1 7l6-6 6 6"/></svg></button>
      <span class="mx-[34px]">ع</span>
      <svg class="w-5 h-4 mr-2.5" viewBox="0 0 20 16" fill="none" stroke="#222" stroke-width="1.500"><path d="M1 6q9-9 18 0M4 9q6-6 12 0M7 12q3-3 6 0"/><circle cx="10" cy="14" r="1.200" fill="#222" stroke="none"/></svg>
      <svg class="w-5 h-4 mr-2.5" viewBox="0 0 20 16" fill="none" stroke="#222" stroke-width="1.400"><path d="M1 5.500h3l4-4v13l-4-4H1zM11 5q2 3 0 6M13.500 3q4 5 0 10M16 1q6 7 0 14"/></svg>
      <svg class="w-5 h-3 mr-5" viewBox="0 0 20 12" fill="none" stroke="#222" stroke-width="1.500"><rect x="1" y="1" width="16" height="10" rx="2.500"/><path d="M3 3h6v6H3z" fill="#222" stroke="none"/><path d="M19 4v4"/></svg>
      <div class="text-[13px] leading-5 pb-1"><div dir="rtl" class="text-right"><bdo dir="ltr">٠٦:١٥</bdo> م</div><div class="text-right"><bdo dir="ltr">٢٠٢٥/٠٨/٢٤</bdo></div></div>
    </div>
    <!-- Watermark -->
    <div class="absolute left-1/2 -ml-[120px] -top-[74px] w-[240px] flex flex-col items-center font-bold text-[#808080]/20 pointer-events-none">
      <div class="text-[72px] leading-[76px] h-[76px] mr-6">مستقل</div>
      <div class="text-[38px] leading-[38px]">mostaql.com</div>
    </div>
  </footer>

  <script>
    // Column headings: A-G are sized to the table, the rest share one width
    const lettered = [['A', 13], ['B', 109], ['C', 89], ['D', 62], ['E', 54], ['F', 185], ['G', 183]];
    for (let i = 7; i < 34; i++) {
      const name = i < 26 ? String.fromCharCode(65 + i) : 'A' + String.fromCharCode(39 + i);
      lettered.push([name === 'AH' ? '' : name, 45]);
    }
    document.getElementById('columns').innerHTML =
      '<div class="w-[21px] shrink-0 border-r border-[#ababab] flex items-end justify-end p-0.5"><svg class="w-2 h-2" viewBox="0 0 8 8"><path d="M8 0v8H0z" fill="#b5b5b5"/></svg></div>' +
      lettered.map(([name, w]) => {
        const look = name === 'F' ? 'bg-[#d2d2d2] text-[#217346] border-b-2 border-b-[#217346]' : '';
        return `<div class="shrink-0 border-r border-[#ababab] ${look}" style="width:${w}px">${name}</div>`;
      }).join('');

    // Cell looks
    const blank = 'border border-[#d4d4d4]';
    const flag = ' bg-[linear-gradient(135deg,#008000_4px,transparent_4px)]';
    const maroon = 'bg-[#632523] text-white font-bold text-[10px] leading-3 text-center';
    const navy = 'bg-[#10243e] text-white font-bold border-b-2 border-black';
    const olive = 'bg-[#494529] text-white font-bold border-2 border-black text-center text-[9px]';
    const pink = 'bg-[#f2dcdb] border border-black text-center';
    const green = 'bg-[#ebf1de] border border-black text-center';
    const blue = 'bg-[#daeef3] border border-black text-center';
    const orange = 'bg-[#fcd5b4] border border-black text-center';
    const side = ' border-r-2 border-l-2 font-bold text-xs leading-[19px]';
    const edge = i => i === 0 ? ' border-t-2' : '';
    const err = '#DIV/0!';
    const money = '<div class="flex justify-between pl-1.5 pr-4"><span>EGP</span><span>-</span></div>';
    const unit = '1 وحدة';
    const digits = ['١', '٢', '٣', '٤', '٥', '٦', '٧', '٨', '٩', '١٠'];

    // rows: [number, height, cells]; a cell is [text, look, colspan, rowspan]
    const rows = [];
    const empty = () => [['', blank], ['', blank], ['', blank], ['', blank], ['', blank], ['', blank]];
    const add = (n, h, cells) => rows.push([n, h, cells]);

    const total = (n, first, label, tail, fill, ink) => {
      const dark = fill + ' text-white font-bold border-y-2 border-black';
      const cells = [
        [first, dark + ' border-x-2 text-center text-[11px]' + flag],
        [unit, 'bg-white font-bold text-xs leading-4 text-center border-y-2 border-black ' + ink, 2],
        [tail, dark + ' text-[8px] leading-3 text-center']
      ];
      if (n === 25) cells.push([label, dark + ' border-r-2 text-[9px] leading-3 text-center', 2]);
      else cells.push([label, dark + ' text-[8px] leading-3 text-center'], ['', dark + ' border-r-2']);
      add(n, 20, cells);
    };

    add(1, 6, empty());
    const band = (n, h1, h2, label, value, head, look) => {
      add(n, h1, [[err, maroon + ' text-[11px]' + flag, 2, 2], [label, maroon, 2, 2], [value, look, 1, 2], [head, maroon, 1, 2]]);
      add(n + 1, h2, []);
    };
    band(2, 13, 14, 'معدل ساعات التشغيل', '0', 'الطاقة المتاحة', maroon);
    add(4, 3, empty());
    band(5, 13, 15, 'ساعات التشغيل', '1', 'عدد الوحدات', 'bg-white text-[#632523] font-bold text-xs text-center border-2 border-[#632523]');
    add(7, 3, empty());
    band(8, 13, 15, 'نقطة التعادل', '', 'سعر البيع', 'bg-white border-2 border-[#217346]');
    add(10, 5, empty());
    add(11, 24, [[err, 'bg-white text-[#10243e] text-center font-bold text-base leading-4 border-[3px] border-[#10243e]', 2], [unit, navy + ' text-sm leading-4 text-center', 2], ['0', navy + ' text-base leading-4 text-right pr-1' + flag], ['إجمالي التكلفة التقديرية للمنتج', navy + ' text-[11px] leading-4']]);
    add(12, 5, empty());
    add(13, 16, [['القيمة للوحدة', olive, 1, 2], ['سعر', olive, 1, 2], ['كمية', olive, 2], ['الحساب', olive, 1, 2], ['<u class="text-[13px] leading-4">التكلفة</u>', olive, 1, 2]]);
    add(14, 17, [['القياس', olive], ['وحده', olive]]);
    add(15, 11, empty());

    ['0.75', '0.6', '0.7', '0.9', '1'].forEach((qty, i) => {
      const cells = [[money, pink + ' font-semibold border-l-2'], [money, pink + flag], [qty, pink], [i % 2 ? 'عدد' : 'كيلو', pink + ' text-[9px]'], ['خام ' + digits[i], pink + ' text-[9px]' + flag]].map(([text, look]) => [text, look + edge(i)]);
      if (i === 0) cells.push(['المواد مباشرة', pink + side + edge(0), 1, 5]);
      add(16 + i, i === 4 ? 14 : 13, cells);
    });
    total(21, money, 'إجمالي التكلفة المعيارية للمواد المباشرة', 'لانتاج', 'bg-[#632523]', 'text-[#632523]');
    add(22, 14, empty());

    [['تشغيلي', 'الاجور الثابتة', 19], ['اضافي', 'اجور متغيرة', 20]].forEach(([kind, pay, h], i) => {
      add(23 + i, h, [[err, green + ' font-bold border-l-2' + flag], [err, green + ' border-r-2' + flag], [err, green + flag], ['ساعة', green + ' text-[9px]'], [kind, green + ' font-bold text-[11px] leading-4 border-l-2'], [pay, green + ' font-bold text-[10px] leading-3 border-r-2']].map(([text, look]) => [text, look + edge(i)]));
    });
    total(25, err, 'إجمالي التكلفة المعيارية للأجور المباشرة', 'لانتاج', 'bg-[#4f6228]', 'text-[#4f6228]');
    add(26, 14, empty());

    const costs = (start, names, height, look, dark, solid, kind, spans) => {
      names.forEach((name, i) => {
        const cells = [[err, look + ' font-bold border-l-2' + flag], [err, look + flag], [err, look + ' border-r-2' + flag], ['ساعة', look + ' text-[9px]'], [name, look + ' text-[9px]' + flag]].map(([text, cell]) => [text, cell + edge(i)]);
        if (i === 0) cells.push(['<div class="pt-3">التكاليف الغير<br>مباشرة</div>', look + side + ' border-b-0' + edge(0), 1, spans[0]]);
        if (i === spans[0]) cells.push([kind, dark + ' text-white text-center font-bold text-[11px] leading-4 border-r-2 border-l-2 border-black', 1, 2]);
        if (i === spans[0] + 2) cells.push(['', look + ' border-r-2 border-l-2 border-t-0', 1, spans[1]]);
        add(start + i, height(i), cells);
      });
      total(start + names.length, err, 'إجمالي التكلفة المعيارية الصناعية الغير مباشرة', 'لانتاج / بيع', dark, solid);
    };
    costs(27, digits.map(d => 'تكلفة متغيرة ' + d).concat('اهلاك خط الانتاج'), () => 14, blue, 'bg-[#215967]', 'text-[#215967]', 'المتغيرة', [7, 2]);
    add(39, 14, empty());
    costs(40, digits.map(d => 'تكلفة ثابتة ' + d), i => i === 9 ? 20 : 13, orange, 'bg-[#974706]', 'text-[#974706]', 'الثابتة', [7, 1]);
    add(51, 13, empty());
    add(52, 13, empty().map(() => ['', 'border-x border-t border-[#d4d4d4]']));
    add(53, 13, [['معادلات تحديد نقطة التعادل', 'bg-white text-center font-bold text-xs leading-4', 6, 2]]);
    add(54, 13, []);
    const foot = ' border-2 border-black text-center font-bold text-[10px] leading-4';
    add(55, 20, [['الوصول', 'bg-[#ffc000]' + foot], ['التكلفة المتغيرة', 'bg-[#92cddc]' + foot], ['اجمالي', 'bg-[#92cddc]' + foot, 2], ['سعر البيع', 'bg-[#632523] text-white' + foot], ['اجمالي', 'bg-[#974706] text-white' + foot]]);

    document.querySelector('#sheet tbody').innerHTML = rows.map(([n, h, cells]) => {
      const on = n === 8 || n === 9 ? 'bg-[#d2d2d2] text-[#217346] border-r-2 border-r-[#217346]' : 'bg-[#e6e6e6] border-r-[#999]';
      const label = n === 4 || n === 7 ? '' : n;
      return `<tr><th class="p-0 border-y border-r border-y-[#c0c0c0] ${on} font-['Lato',sans-serif] font-semibold"><div class="flex items-end justify-center overflow-hidden text-[9px] leading-[9px]" style="height:${h - 1}px">${label}</div></th><td class="p-0 ${blank}"></td>` +
        cells.map(([text, look, cs = 1, rs = 1]) => {
          const rtl = /[\u0600-\u06ff]/.test(text) ? ' dir="rtl"' : '';
          return `<td${rtl} colspan="${cs}" rowspan="${rs}" class="p-0 whitespace-nowrap overflow-hidden ${look}">${text}</td>`;
        }).join('') + '</tr>';
    }).join('');

    // Sheet tabs with their widths
    const tabs = [['الرئيسية', 82], ['اجمالي التكاليف خلال الفترة', 216], ['اهلاك خطوط الانتاج', 160], ['توزيع التكاليف', 126], ['الصنف ١', 84], ['الصنف ٢', 87], ['الصنف ٣', 89], ['الصنف ٤', 86], ['الصنف ٥', 88], ['الصنف ٦', 88], ['الصنف ٧', 89], ['الصنف ٨', 89], ['لصنف ٩', 73]];
    document.getElementById('tabs').innerHTML = tabs.map(([name, w], i) => {
      const look = i === 4 ? 'h-[26px] bg-white text-[#217346] text-[15px] font-bold border-b-2 border-[#217346] -mt-px' : i === 12 ? 'h-6' : 'h-6 border-r border-[#999]';
      const first = i === 0 ? 'border-l' : '';
      return `<button dir="rtl" class="whitespace-nowrap leading-5 pb-1 ${first} ${look}" style="width:${w}px">${name}</button>`;
    }).join('');
  </script>
</body>
</html>
